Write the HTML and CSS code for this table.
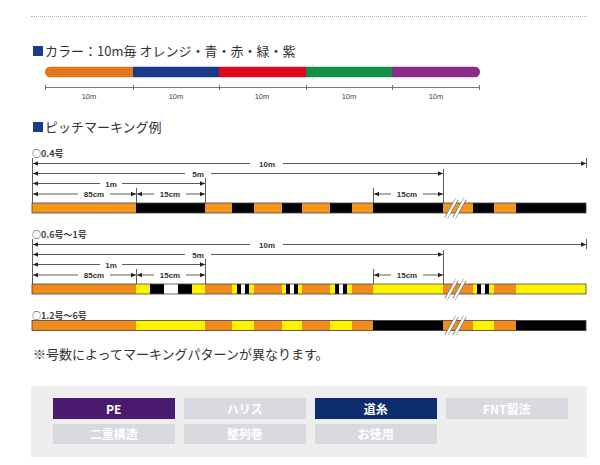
FILE: index.html
```html
<!DOCTYPE html>
<html lang="ja">
<head>
<meta charset="utf-8">
<title>カラー・ピッチマーキング</title>
<link rel="stylesheet" href="styles.css">
</head>
<body>
<div class="page">
  <div class="rule"></div>

  <h2 class="heading"><span class="sq"></span>カラー：10m毎 オレンジ・青・赤・緑・紫</h2>
  <svg class="colorbar" width="556" height="40" viewBox="31 62 556 40">
    <defs>
      <clipPath id="round"><rect x="45" y="66.5" width="435" height="11" rx="5.5"/></clipPath>
    </defs>
    <g clip-path="url(#round)">
      <rect x="45" y="66.5" width="88" height="11" fill="#e2761c"/>
      <rect x="133" y="66.5" width="86" height="11" fill="#1a3a8a"/>
      <rect x="219" y="66.5" width="87" height="11" fill="#e0081e"/>
      <rect x="306" y="66.5" width="86" height="11" fill="#138f48"/>
      <rect x="392" y="66.5" width="88" height="11" fill="#8c2a8a"/>
    </g>
    <g stroke="#555" stroke-width="0.8">
      <line x1="45" y1="87.5" x2="479" y2="87.5"/>
      <line x1="45.5" y1="85" x2="45.5" y2="90"/>
      <line x1="133.5" y1="85" x2="133.5" y2="90"/>
      <line x1="219.5" y1="85" x2="219.5" y2="90"/>
      <line x1="306.5" y1="85" x2="306.5" y2="90"/>
      <line x1="392.5" y1="85" x2="392.5" y2="90"/>
      <line x1="479.5" y1="85" x2="479.5" y2="90"/>
    </g>
    <g class="lbl-light" text-anchor="middle">
      <text x="89" y="99">10m</text>
      <text x="176" y="99">10m</text>
      <text x="262" y="99">10m</text>
      <text x="349" y="99">10m</text>
      <text x="436" y="99">10m</text>
    </g>
  </svg>

  <h2 class="heading heading-pitch"><span class="sq"></span>ピッチマーキング例</h2>
  <svg class="pitch" width="556" height="195" viewBox="31 140 556 195">
    <defs>
      <marker id="ar" viewBox="0 0 6 6" refX="6" refY="3" markerWidth="6" markerHeight="5" orient="auto-start-reverse" markerUnits="userSpaceOnUse">
        <path d="M0,0.4 L6,3 L0,5.6z" fill="#222"/>
      </marker>
      <g id="dims">
        <g stroke="#333" stroke-width="0.8" fill="none">
          <line x1="32.5" y1="158" x2="32.5" y2="203"/>
          <line x1="586.5" y1="158" x2="586.5" y2="168"/>
          <line x1="443.5" y1="169" x2="443.5" y2="203"/>
          <line x1="205.5" y1="178" x2="205.5" y2="203"/>
          <line x1="136.5" y1="188" x2="136.5" y2="203"/>
          <line x1="373.5" y1="188" x2="373.5" y2="203"/>
          <line x1="33" y1="163.5" x2="586" y2="163.5" marker-start="url(#ar)" marker-end="url(#ar)"/>
          <line x1="33" y1="173.5" x2="443" y2="173.5" marker-start="url(#ar)" marker-end="url(#ar)"/>
          <line x1="33" y1="183.5" x2="205" y2="183.5" marker-start="url(#ar)" marker-end="url(#ar)"/>
          <line x1="33" y1="194" x2="136" y2="194" marker-start="url(#ar)" marker-end="url(#ar)"/>
          <line x1="137" y1="194" x2="205" y2="194" marker-start="url(#ar)" marker-end="url(#ar)"/>
          <line x1="374" y1="194" x2="443" y2="194" marker-start="url(#ar)" marker-end="url(#ar)"/>
        </g>
        <g fill="#fff">
          <rect x="250" y="159" width="33" height="9"/>
          <rect x="185" y="169" width="26" height="9"/>
          <rect x="100" y="179" width="22" height="9"/>
          <rect x="78" y="189.5" width="32" height="9"/>
          <rect x="154" y="189.5" width="32" height="9"/>
          <rect x="391" y="189.5" width="32" height="9"/>
        </g>
        <g class="lbl" text-anchor="middle">
          <text x="267" y="166.5">10m</text>
          <text x="198" y="176.5">5m</text>
          <text x="111" y="186.5">1m</text>
          <text x="94" y="197">85cm</text>
          <text x="170" y="197">15cm</text>
          <text x="407" y="197">15cm</text>
        </g>
      </g>
      <g id="brk">
        <g stroke="#777" stroke-width="3.6" stroke-linecap="butt">
          <line x1="446" y1="218" x2="457" y2="199"/>
          <line x1="454" y1="218" x2="465" y2="199"/>
        </g>
        <g stroke="#fff" stroke-width="2.4">
          <line x1="446" y1="218.5" x2="457" y2="198.5"/>
          <line x1="454" y1="218.5" x2="465" y2="198.5"/>
        </g>
      </g>
    </defs>

    <!-- row 1 : 0.4号 -->
    <text class="size" x="32" y="157">○0.4号</text>
    <use href="#dims"/>
    <g>
      <rect x="32" y="203" width="554" height="10" fill="#f4951c"/>
      <g fill="#000">
        <rect x="136" y="203" width="69" height="10"/>
        <rect x="232" y="203" width="22" height="10"/>
        <rect x="282" y="203" width="20" height="10"/>
        <rect x="330" y="203" width="22" height="10"/>
        <rect x="373" y="203" width="70" height="10"/>
        <rect x="473" y="203" width="21" height="10"/>
        <rect x="516" y="203" width="70" height="10"/>
      </g>
      <rect class="edge" x="32" y="203" width="554" height="10"/>
      <use href="#brk"/>
    </g>

    <!-- row 2 : 0.6号〜1号 -->
    <g transform="translate(0 81)">
      <text class="size" x="32" y="157">○0.6号〜1号</text>
      <use href="#dims"/>
      <rect x="32" y="203" width="554" height="10" fill="#f08c1c"/>
      <g fill="#fff200">
        <rect x="136" y="203" width="69" height="10"/>
        <rect x="232" y="203" width="22" height="10"/>
        <rect x="282" y="203" width="20" height="10"/>
        <rect x="330" y="203" width="22" height="10"/>
        <rect x="373" y="203" width="70" height="10"/>
        <rect x="473" y="203" width="21" height="10"/>
        <rect x="516" y="203" width="70" height="10"/>
      </g>
      <g fill="#000">
        <rect x="150" y="203" width="14" height="10"/>
        <rect x="178" y="203" width="14" height="10"/>
        <rect x="237" y="203" width="4" height="10"/>
        <rect x="245" y="203" width="4" height="10"/>
        <rect x="286" y="203" width="4" height="10"/>
        <rect x="294" y="203" width="4" height="10"/>
        <rect x="335" y="203" width="4" height="10"/>
        <rect x="343" y="203" width="4" height="10"/>
        <rect x="477" y="203" width="4" height="10"/>
        <rect x="485" y="203" width="4" height="10"/>
      </g>
      <g fill="#fff">
        <rect x="164" y="203" width="14" height="10"/>
        <rect x="241" y="203" width="4" height="10"/>
        <rect x="290" y="203" width="4" height="10"/>
        <rect x="339" y="203" width="4" height="10"/>
        <rect x="481" y="203" width="4" height="10"/>
      </g>
      <rect class="edge" x="32" y="203" width="554" height="10"/>
      <use href="#brk"/>
    </g>

    <!-- row 3 : 1.2号〜6号 -->
    <text class="size" x="32" y="318.5">○1.2号〜6号</text>
    <g transform="translate(0 117.5)">
      <rect x="32" y="203" width="554" height="10" fill="#f08c1c"/>
      <g fill="#fff200">
        <rect x="136" y="203" width="69" height="10"/>
        <rect x="232" y="203" width="22" height="10"/>
        <rect x="282" y="203" width="20" height="10"/>
        <rect x="330" y="203" width="22" height="10"/>
        <rect x="473" y="203" width="21" height="10"/>
      </g>
      <g fill="#000">
        <rect x="373" y="203" width="70" height="10"/>
        <rect x="516" y="203" width="70" height="10"/>
      </g>
      <rect class="edge" x="32" y="203" width="554" height="10"/>
      <use href="#brk"/>
    </g>
  </svg>

  <p class="note">※号数によってマーキングパターンが異なります。</p>

  <nav class="nav">
    <a class="btn btn-pe">PE</a>
    <a class="btn">ハリス</a>
    <a class="btn btn-main">道糸</a>
    <a class="btn">FNT製法</a>
    <a class="btn">二重構造</a>
    <a class="btn">整列巻</a>
    <a class="btn">お徳用</a>
  </nav>
</div>
</body>
</html>
```

FILE: styles.css
```css
html, body {
  margin: 0;
  padding: 0;
  background: #fff;
}

body {
  font-family: "Noto Sans CJK JP", "Noto Sans", sans-serif;
  color: #333;
}

.page {
  padding: 16px 13px 0 31px;
  width: 556px;
}

.rule {
  height: 0;
  border-top: 1px dotted #b4b4b4;
}

.heading {
  margin: 25px 0 0 2px;
  font-size: 13px;
  font-weight: 400;
  line-height: 18px;
  height: 18px;
  color: #333;
  display: flex;
  align-items: center;
}

.heading-pitch {
  margin-top: 16px;
}

.sq {
  display: inline-block;
  width: 10px;
  height: 10px;
  background: #1b3c87;
  margin-right: 2px;
}

.colorbar {
  display: block;
  margin-top: 2px;
}

.pitch {
  display: block;
  margin-top: 4px;
}

.lbl-light {
  font-family: "Liberation Sans", Arial, sans-serif;
  font-size: 7.5px;
  fill: #444;
}

.lbl {
  font-family: "Liberation Sans", Arial, sans-serif;
  font-size: 8px;
  font-weight: 700;
  fill: #333;
}

.size {
  font-family: "Noto Sans CJK JP", sans-serif;
  font-size: 9px;
  font-weight: 700;
  fill: #444;
}

.edge {
  fill: none;
  stroke: #444;
  stroke-width: 0.8;
}

.note {
  margin: 10px 0 0 2px;
  font-size: 13px;
  line-height: 18px;
  color: #333;
}

.nav {
  margin-top: 23px;
  background: #eeeeee;
  padding: 12px 20px 13px 22px;
  display: grid;
  grid-template-columns: repeat(4, 121.5px);
  grid-auto-rows: 20.5px;
  column-gap: 9.5px;
  row-gap: 5px;
}

.btn {
  display: flex;
  align-items: center;
  justify-content: center;
  background: #d9d9df;
  color: #fff;
  font-size: 12px;
  font-weight: 700;
  text-decoration: none;
}

.btn-pe {
  background: #4a1a6f;
}

.btn-main {
  background: #0b2d6d;
}
```
